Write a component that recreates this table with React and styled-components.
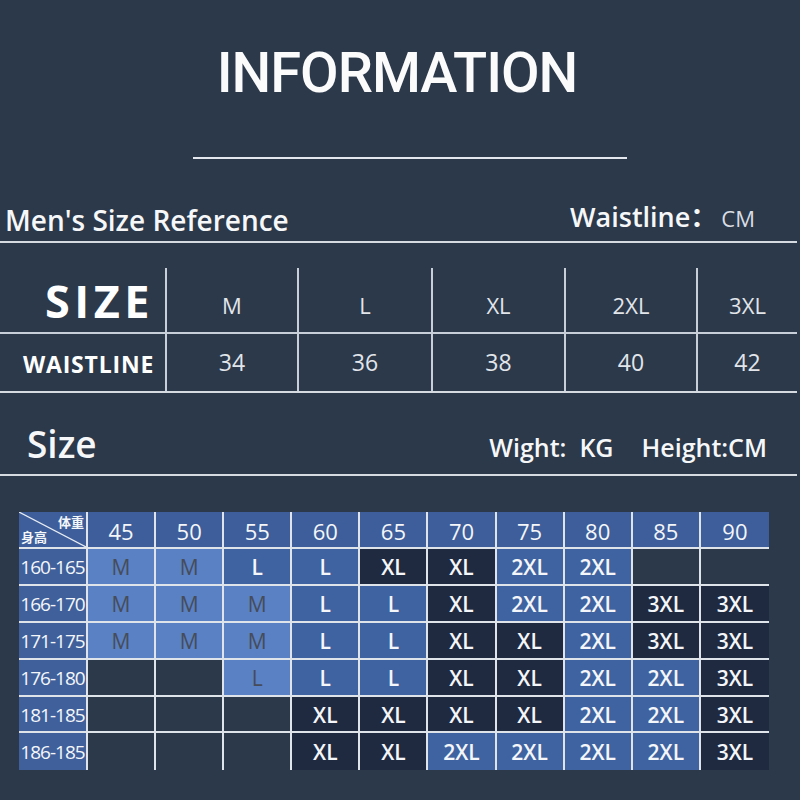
import React from 'react';
import styled, { createGlobalStyle } from 'styled-components';

const GlobalStyle = createGlobalStyle`
  html, body {
    margin: 0;
    padding: 0;
    background: #2b394a;
  }
  * {
    box-sizing: border-box;
  }
`

const Page = styled.div`
  width: 800px;
  height: 800px;
  background: #2b394a;
  color: #ffffff;
  font-family: "Open Sans", "Noto Sans CJK SC", sans-serif;
  overflow: hidden;
`

const Title = styled.h1`
  margin: 46px 0 0 0;
  height: 55px;
  font-family: Roboto, "Liberation Sans", sans-serif;
  font-size: 56px;
  line-height: 55px;
  font-weight: 500;
  letter-spacing: -1px;
  text-align: center;
  color: #fbfbfb;
  padding-right: 6px;
`

const Divider = styled.div`
  margin: 56px 0 0 193px;
  width: 434px;
  height: 2px;
  background: #e4e8ee;
`

const HeadBar = styled.div`
  display: flex;
  align-items: flex-end;
  justify-content: space-between;
  width: 797px;
  height: ${({ $h }) => $h}px;
  border-bottom: 2px solid #d6dbe2;
  padding: 0 ${({ $right }) => $right}px 0 ${({ $left }) => $left}px;
`

const HeadTitle = styled.div`
  font-size: ${({ $size }) => $size}px;
  font-weight: 600;
  line-height: 1;
  padding-bottom: ${({ $pb }) => $pb}px;
  color: #f6f7f9;
`

const HeadUnit = styled.div`
  display: flex;
  align-items: baseline;
  font-size: ${({ $size }) => $size}px;
  font-weight: 600;
  line-height: 1;
  padding-bottom: ${({ $pb }) => $pb}px;
  color: #f6f7f9;
  gap: ${({ $gap }) => $gap}px;
`

const UnitLight = styled.span`
  font-weight: 400;
  color: #d9dde3;
  font-size: 22px;
`

const WaistTable = styled.div`
  display: grid;
  grid-template-columns: 165px 132px 134px 133px 132px 101px;
  grid-template-rows: 64px 59px;
  width: 797px;
  margin-top: 25px;
  border-bottom: 2px solid #d6dbe2;
`

const WaistCell = styled.div`
  display: flex;
  align-items: center;
  justify-content: ${({ $label }) => ($label ? 'flex-start' : 'center')};
  padding-left: ${({ $pl }) => $pl || 0}px;
  padding-top: ${({ $pt }) => $pt || 0}px;
  border-left: ${({ $label }) => ($label ? 'none' : '2px solid #c9cfd8')};
  border-top: ${({ $row }) => ($row === 1 ? '2px solid #c9cfd8' : 'none')};
  font-size: ${({ $size }) => $size}px;
  font-weight: ${({ $label }) => ($label ? 700 : 500)};
  letter-spacing: ${({ $ls }) => $ls || 0}px;
  color: ${({ $label }) => ($label ? '#ffffff' : '#e2e5ea')};
  line-height: 1;
`

const Chart = styled.div`
  display: grid;
  grid-template-columns: 69px repeat(10, 68.1px);
  grid-template-rows: 37px repeat(6, 36.9px);
  margin: 36px 0 0 19px;
  width: 750px;
`

const cellBg = {
  head: '#3d5e9a',
  side: '#3f609b',
  l: '#5981c4',
  m: '#3f63a0',
  d: '#1f2a41',
  e: 'transparent',
}

const Cell = styled.div`
  display: flex;
  align-items: center;
  justify-content: center;
  background: ${({ $kind }) => cellBg[$kind]};
  border-right: ${({ $lastCol }) => ($lastCol ? 'none' : '2px solid #dfe3ea')};
  border-bottom: ${({ $lastRow }) => ($lastRow ? 'none' : '2px solid #dfe3ea')};
  color: ${({ $kind }) => ($kind === 'l' ? '#464c59' : '#f4f6f9')};
  font-size: ${({ $kind }) => ($kind === 'head' ? 22 : $kind === 'side' ? 19 : 21)}px;
  font-weight: ${({ $kind }) => ($kind === 'head' || $kind === 'l' ? 400 : $kind === 'side' ? 500 : 600)};
  letter-spacing: ${({ $kind }) => ($kind === 'side' ? '-1px' : '0')};
  padding-top: 2px;
  line-height: 1;
`

const Corner = styled.div`
  position: relative;
  background: #3d5e9a;
  border-right: 2px solid #dfe3ea;
  border-bottom: 2px solid #dfe3ea;
  overflow: hidden;
`

const CornerLine = styled.svg`
  position: absolute;
  inset: 0;
  width: 100%;
  height: 100%;
`

const CornerText = styled.span`
  position: absolute;
  font-family: "Noto Sans CJK SC", sans-serif;
  font-size: 13px;
  font-weight: 700;
  line-height: 1;
  color: #f4f6f9;
  ${({ $top }) => ($top ? 'top: 3px; right: 2px;' : 'bottom: 4px; left: 2px;')}
`

const sizes = ['M', 'L', 'XL', '2XL', '3XL'];
const waist = ['34', '36', '38', '40', '42'];
const weights = ['45', '50', '55', '60', '65', '70', '75', '80', '85', '90'];

const rows = [
  ['160-165', 'l:M', 'l:M', 'm:L', 'm:L', 'd:XL', 'd:XL', 'm:2XL', 'm:2XL', 'e:', 'e:'],
  ['166-170', 'l:M', 'l:M', 'l:M', 'm:L', 'm:L', 'd:XL', 'm:2XL', 'm:2XL', 'd:3XL', 'd:3XL'],
  ['171-175', 'l:M', 'l:M', 'l:M', 'm:L', 'm:L', 'd:XL', 'd:XL', 'm:2XL', 'd:3XL', 'd:3XL'],
  ['176-180', 'e:', 'e:', 'l:L', 'm:L', 'm:L', 'd:XL', 'd:XL', 'm:2XL', 'm:2XL', 'd:3XL'],
  ['181-185', 'e:', 'e:', 'e:', 'd:XL', 'd:XL', 'd:XL', 'd:XL', 'm:2XL', 'm:2XL', 'd:3XL'],
  ['186-185', 'e:', 'e:', 'e:', 'd:XL', 'd:XL', 'm:2XL', 'm:2XL', 'm:2XL', 'm:2XL', 'd:3XL'],
];

export default function App() {
  return (
    <>
      <GlobalStyle />
      <Page>
        <Title>INFORMATION</Title>
        <Divider />

        <HeadBar $h={84} $left={5} $right={42}>
          <HeadTitle $size={28} $pb={7}>Men's Size Reference</HeadTitle>
          <HeadUnit $size={27} $pb={11} $gap={4}>
            <span>Waistline：</span>
            <UnitLight>CM</UnitLight>
          </HeadUnit>
        </HeadBar>

        <WaistTable>
          <WaistCell $label $pl={45} $size={45} $ls={4.5} $pt={0}>SIZE</WaistCell>
          {sizes.map((s) => (
            <WaistCell key={s} $size={22} $pt={9}>{s}</WaistCell>
          ))}
          <WaistCell $label $row={1} $pl={23} $size={23} $ls={0.8} $pt={4}>WAISTLINE</WaistCell>
          {waist.map((w) => (
            <WaistCell key={w} $row={1} $size={23} $pt={0}>{w}</WaistCell>
          ))}
        </WaistTable>

        <HeadBar $h={83} $left={27} $right={30}>
          <HeadTitle $size={37} $pb={12}>Size</HeadTitle>
          <HeadUnit $size={25} $pb={14} $gap={28}>
            <span>Wight:&nbsp; KG</span>
            <span>Height:CM</span>
          </HeadUnit>
        </HeadBar>

        <Chart>
          <Corner>
            <CornerLine viewBox="0 0 67 35" preserveAspectRatio="none">
              <line x1="0" y1="0" x2="67" y2="35" stroke="#e8ecf2" strokeWidth="1.2" />
            </CornerLine>
            <CornerText $top>体重</CornerText>
            <CornerText>身高</CornerText>
          </Corner>
          {weights.map((w, i) => (
            <Cell key={w} $kind="head" $lastCol={i === 9}>{w}</Cell>
          ))}
          {rows.map((row, r) => (
            <React.Fragment key={row[0]}>
              <Cell $kind="side" $lastRow={r === rows.length - 1}>{row[0]}</Cell>
              {row.slice(1).map((c, i) => {
                const [kind, label] = c.split(':');
                return (
                  <Cell
                    key={i}
                    $kind={kind}
                    $lastCol={i === 9}
                    $lastRow={r === rows.length - 1}
                  >
                    {label}
                  </Cell>
                );
              })}
            </React.Fragment>
          ))}
        </Chart>
      </Page>
    </>
  );
}
